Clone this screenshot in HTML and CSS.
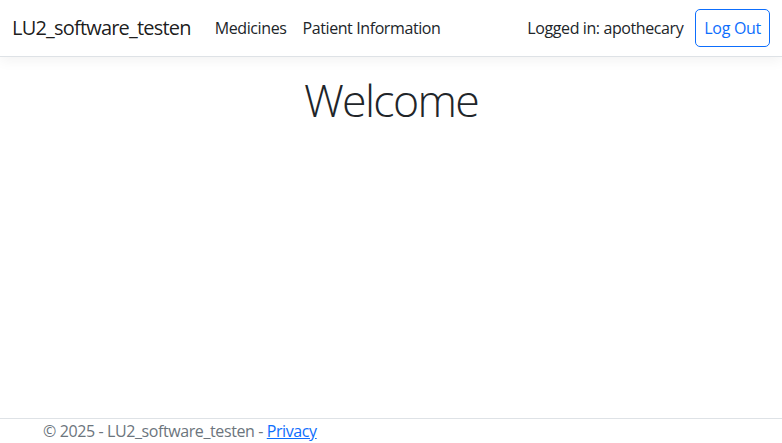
FILE: index.html
```html
<!DOCTYPE html>
<html lang="en">
<head>
<meta charset="utf-8">
<title>LU2_software_testen</title>
<link rel="stylesheet" href="styles.css">
</head>
<body>
<header>
  <nav class="navbar">
    <a class="brand" href="#">LU2_software_testen</a>
    <ul class="nav-left">
      <li><a class="nav-link" href="#">Medicines</a></li>
      <li><a class="nav-link" href="#">Patient Information</a></li>
    </ul>
    <div class="nav-right">
      <span class="logged">Logged in: apothecary</span>
      <button class="btn-outline">Log Out</button>
    </div>
  </nav>
</header>
<main class="main">
  <h1 class="display">Welcome</h1>
</main>
<footer class="footer">
  <div class="container">&copy; 2025 - LU2_software_testen - <a href="#">Privacy</a></div>
</footer>
</body>
</html>
```
FILE: styles.css
```css
* { box-sizing: border-box; }
html, body { margin: 0; padding: 0; height: 100%; }
body {
  font-family: "Open Sans", "Noto Sans", sans-serif;
  font-size: 16px;
  line-height: 1.5;
  letter-spacing: -0.4px;
  color: #212529;
  background: #fff;
  display: flex;
  flex-direction: column;
  min-height: 100vh;
}
.navbar {
  display: flex;
  align-items: center;
  padding: 8px 12px;
  height: 57px;
  border-bottom: 1px solid #dee2e6;
  box-shadow: 0 .25rem .75rem rgba(0,0,0,.05);
}
.brand {
  font-size: 20px;
  letter-spacing: -0.8px;
  color: rgba(0,0,0,.9);
  text-decoration: none;
  margin-right: 16px;
  line-height: 30px;
}
.nav-left {
  list-style: none;
  margin: 0;
  padding: 0;
  display: flex;
  flex: 1;
}
.nav-link {
  display: block;
  padding: 8px;
  color: #212529;
  text-decoration: none;
}
.nav-right {
  display: flex;
  align-items: center;
  gap: 12px;
}
.logged { color: #212529; }
.btn-outline {
  font: inherit;
  letter-spacing: -0.3px;
  color: #0d6efd;
  background: transparent;
  border: 1px solid #0d6efd;
  border-radius: 5px;
  padding: 6px 8px;
  line-height: 24px;
  cursor: pointer;
}
.main {
  flex: 1;
  padding-top: 16px;
}
.display {
  text-align: center;
  font-size: 44.7px;
  font-weight: 300;
  letter-spacing: -1.7px;
  line-height: 1.2;
  margin: 0;
}
.footer {
  border-top: 1px solid #dee2e6;
  height: 25px;
  line-height: 24px;
  color: #6c757d;
  white-space: nowrap;
}
.container {
  max-width: 720px;
  margin: 0 auto;
  padding: 0 12px;
}
.footer a { color: #0d6efd; }
```
